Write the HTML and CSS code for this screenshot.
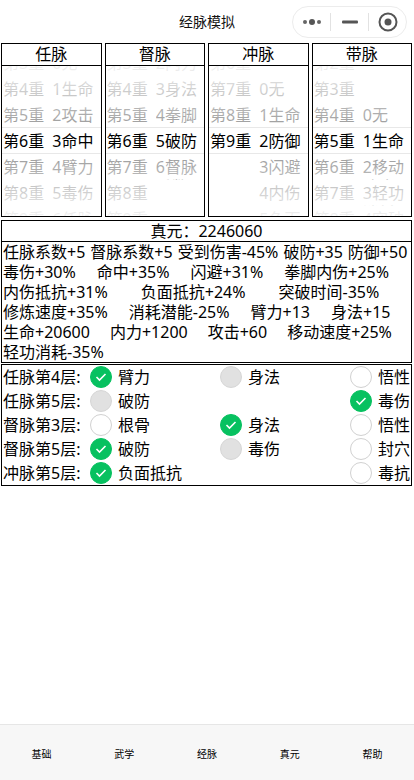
FILE: index.html
```html
<!DOCTYPE html>
<html lang="zh-CN">
<head>
<meta charset="utf-8">
<meta name="viewport" content="width=device-width, initial-scale=1">
<title>经脉模拟</title>
<link rel="stylesheet" href="styles.css">
</head>
<body>
<div class="page">
  <header class="nav">
    <div class="nav-title">经脉模拟</div>
    <div class="capsule">
      <span class="cap-btn">
        <svg width="20" height="8" viewBox="0 0 20 8"><circle cx="3" cy="4" r="2" fill="#666"/><circle cx="10" cy="4" r="3" fill="#555"/><circle cx="17" cy="4" r="2" fill="#666"/></svg>
      </span>
      <span class="cap-div"></span>
      <span class="cap-btn">
        <svg width="16" height="4" viewBox="0 0 16 4"><rect x="0" y="0.5" width="16" height="3" rx="1" fill="#555"/></svg>
      </span>
      <span class="cap-div"></span>
      <span class="cap-btn">
        <svg width="20" height="20" viewBox="0 0 20 20"><circle cx="10" cy="10" r="8.5" fill="none" stroke="#555" stroke-width="2"/><circle cx="10" cy="10" r="3.5" fill="#555"/></svg>
      </span>
    </div>
  </header>

  <main class="main">
    <section class="veins">
      <div class="vein">
        <div class="vein-title">任脉</div>
        <div class="picker">
          <div class="cols">
            <div class="col">
              <div class="item">第3重</div><div class="item">第4重</div><div class="item">第5重</div><div class="item">第6重</div><div class="item">第7重</div><div class="item">第8重</div><div class="item">第9重</div>
            </div>
            <div class="col">
              <div class="item">0无</div><div class="item">1生命</div><div class="item">2攻击</div><div class="item">3命中</div><div class="item">4臂力</div><div class="item">5毒伤</div><div class="item">6任脉系数</div>
            </div>
          </div>
          <div class="mask"></div>
          <div class="indicator"></div>
        </div>
      </div>

      <div class="vein">
        <div class="vein-title">督脉</div>
        <div class="picker">
          <div class="cols">
            <div class="col">
              <div class="item">第3重</div><div class="item">第4重</div><div class="item">第5重</div><div class="item">第6重</div><div class="item">第7重</div><div class="item">第8重</div><div class="item">第9重</div>
            </div>
            <div class="col">
              <div class="item">2内力</div><div class="item">3身法</div><div class="item">4拳脚内伤</div><div class="item">5破防</div><div class="item">6督脉系数</div><div class="item"></div><div class="item"></div>
            </div>
          </div>
          <div class="mask"></div>
          <div class="indicator"></div>
        </div>
      </div>

      <div class="vein">
        <div class="vein-title">冲脉</div>
        <div class="picker">
          <div class="cols">
            <div class="col">
              <div class="item">第6重</div><div class="item">第7重</div><div class="item">第8重</div><div class="item">第9重</div><div class="item"></div><div class="item"></div><div class="item"></div>
            </div>
            <div class="col">
              <div class="item"></div><div class="item">0无</div><div class="item">1生命</div><div class="item">2防御</div><div class="item">3闪避</div><div class="item">4内伤</div><div class="item">5负面抵抗</div>
            </div>
          </div>
          <div class="mask"></div>
          <div class="indicator"></div>
        </div>
      </div>

      <div class="vein">
        <div class="vein-title">带脉</div>
        <div class="picker">
          <div class="cols">
            <div class="col">
              <div class="item">第2重</div><div class="item">第3重</div><div class="item">第4重</div><div class="item">第5重</div><div class="item">第6重</div><div class="item">第7重</div><div class="item">第8重</div>
            </div>
            <div class="col">
              <div class="item"></div><div class="item"></div><div class="item">0无</div><div class="item">1生命</div><div class="item">2移动速度</div><div class="item">3轻功消耗</div><div class="item">4突破时间</div>
            </div>
          </div>
          <div class="mask"></div>
          <div class="indicator"></div>
        </div>
      </div>
    </section>

    <section class="zy">
      <div class="zy-head">真元：2246060</div>
      <div class="stats">
        <div class="srow g1"><span>任脉系数+5</span><span>督脉系数+5</span><span>受到伤害-45%</span><span>破防+35</span><span>防御+50</span></div>
        <div class="srow g2"><span>毒伤+30%</span><span>命中+35%</span><span>闪避+31%</span><span>拳脚内伤+25%</span></div>
        <div class="srow g3"><span>内伤抵抗+31%</span><span>负面抵抗+24%</span><span>突破时间-35%</span></div>
        <div class="srow g4"><span>修炼速度+35%</span><span>消耗潜能-25%</span><span>臂力+13</span><span>身法+15</span></div>
        <div class="srow g5"><span>生命+20600</span><span>内力+1200</span><span>攻击+60</span><span>移动速度+25%</span></div>
        <div class="srow"><span>轻功消耗-35%</span></div>
      </div>
    </section>

    <section class="opts">
      <div class="orow">
        <span class="olabel">任脉第4层:</span>
        <span class="opt"><span class="cb on"><svg width="12" height="10" viewBox="0 0 12 10"><polyline points="1.5,5 4.5,8 10.5,2" fill="none" stroke="#fff" stroke-width="1.6"/></svg></span>臂力</span>
        <span class="opt"><span class="cb dis"></span>身法</span>
        <span class="opt"><span class="cb"></span>悟性</span>
      </div>
      <div class="orow">
        <span class="olabel">任脉第5层:</span>
        <span class="opt"><span class="cb dis"></span>破防</span>
        <span class="opt"></span>
        <span class="opt"><span class="cb on"><svg width="12" height="10" viewBox="0 0 12 10"><polyline points="1.5,5 4.5,8 10.5,2" fill="none" stroke="#fff" stroke-width="1.6"/></svg></span>毒伤</span>
      </div>
      <div class="orow">
        <span class="olabel">督脉第3层:</span>
        <span class="opt"><span class="cb"></span>根骨</span>
        <span class="opt"><span class="cb on"><svg width="12" height="10" viewBox="0 0 12 10"><polyline points="1.5,5 4.5,8 10.5,2" fill="none" stroke="#fff" stroke-width="1.6"/></svg></span>身法</span>
        <span class="opt"><span class="cb"></span>悟性</span>
      </div>
      <div class="orow">
        <span class="olabel">督脉第5层:</span>
        <span class="opt"><span class="cb on"><svg width="12" height="10" viewBox="0 0 12 10"><polyline points="1.5,5 4.5,8 10.5,2" fill="none" stroke="#fff" stroke-width="1.6"/></svg></span>破防</span>
        <span class="opt"><span class="cb dis"></span>毒伤</span>
        <span class="opt"><span class="cb"></span>封穴</span>
      </div>
      <div class="orow">
        <span class="olabel">冲脉第5层:</span>
        <span class="opt"><span class="cb on"><svg width="12" height="10" viewBox="0 0 12 10"><polyline points="1.5,5 4.5,8 10.5,2" fill="none" stroke="#fff" stroke-width="1.6"/></svg></span>负面抵抗</span>
        <span class="opt"></span>
        <span class="opt"><span class="cb"></span>毒抗</span>
      </div>
    </section>
  </main>

  <nav class="tabbar">
    <span class="tab">基础</span>
    <span class="tab">武学</span>
    <span class="tab">经脉</span>
    <span class="tab">真元</span>
    <span class="tab">帮助</span>
  </nav>
</div>
</body>
</html>
```
FILE: styles.css
```css
* { box-sizing: border-box; }
html, body { margin: 0; padding: 0; background: #fff; }
body {
  font-family: "Noto Sans", "Noto Sans CJK SC", sans-serif;
  color: #000;
}
.page {
  height: 780px;
  display: flex;
  flex-direction: column;
}
.nav {
  position: relative;
  height: 43px;
  flex: none;
  display: flex;
  align-items: center;
  justify-content: center;
}
.nav-title {
  font-size: 14px;
  line-height: 20px;
  color: #111;
}
.capsule {
  position: absolute;
  top: 6px;
  right: 7px;
  width: 115px;
  height: 32px;
  border: 1px solid #ececec;
  border-radius: 16px;
  background: #fff;
  display: flex;
  align-items: center;
}
.cap-btn {
  flex: 1;
  display: flex;
  align-items: center;
  justify-content: center;
}
.cap-div {
  width: 1px;
  height: 18px;
  background: #e2e2e2;
}
.main {
  flex: 1;
  padding: 0 2px 0 1px;
}
.veins {
  display: flex;
  gap: 3px;
}
.vein {
  flex: 1;
  border: 1px solid #000;
  min-width: 0;
}
.vein-title {
  height: 22px;
  border-bottom: 1px solid #000;
  text-align: center;
  font-size: 16px;
  line-height: 21px;
}
.picker {
  position: relative;
  height: 150px;
  overflow: hidden;
}
.cols {
  display: flex;
  margin-top: -16px;
}
.col {
  width: 50%;
  padding-left: 1px;
}
.item {
  height: 26px;
  overflow: hidden;
  font-size: 16px;
  line-height: 20px;
  padding-top: 3px;
}
.mask {
  position: absolute;
  inset: 0;
  background-image:
    linear-gradient(180deg, rgba(255,255,255,0.95), rgba(255,255,255,0.6)),
    linear-gradient(0deg, rgba(255,255,255,0.95), rgba(255,255,255,0.6));
  background-position: top, bottom;
  background-size: 100% 62px;
  background-repeat: no-repeat;
}
.indicator {
  position: absolute;
  left: 0;
  right: 0;
  top: 61px;
  height: 27px;
  border-top: 1px solid #e8e8e8;
  border-bottom: 1px solid #e8e8e8;
}
.zy {
  margin-top: 3px;
  border: 1px solid #000;
}
.zy-head {
  height: 21px;
  border-bottom: 1px solid #000;
  text-align: center;
  font-size: 16px;
  line-height: 20px;
}
.stats {
  font-size: 16px;
  line-height: 20px;
  padding-left: 1px;
}
.srow {
  display: flex;
  white-space: nowrap;
}
.g1 { gap: 5px; }
.g2 { gap: 21px; }
.g3 { gap: 33px; }
.g4 { gap: 21px; }
.g5 { gap: 20px; }
.opts {
  margin-top: 1px;
  border: 1px solid #000;
  padding-left: 1px;
}
.orow {
  display: grid;
  grid-template-columns: 87px 130px 130px 1fr;
  height: 24px;
  align-items: center;
  font-size: 16px;
  line-height: 20px;
}
.olabel { white-space: nowrap; }
.opt {
  display: flex;
  align-items: center;
  white-space: nowrap;
}
.cb {
  width: 22px;
  height: 22px;
  flex: none;
  border-radius: 50%;
  border: 1px solid #d1d1d1;
  background: #fff;
  margin-right: 6px;
  display: flex;
  align-items: center;
  justify-content: center;
}
.cb.on {
  background: #07c160;
  border-color: #07c160;
}
.cb.dis {
  background: #e1e1e1;
  border-color: #d6d6d6;
}
.tabbar {
  flex: none;
  height: 56px;
  border-top: 1px solid #e6e6e6;
  background: #f7f7f7;
  display: flex;
  align-items: center;
  padding-top: 3px;
}
.tab {
  flex: 1;
  text-align: center;
  font-size: 10px;
  line-height: 14px;
  color: #000;
}
```
